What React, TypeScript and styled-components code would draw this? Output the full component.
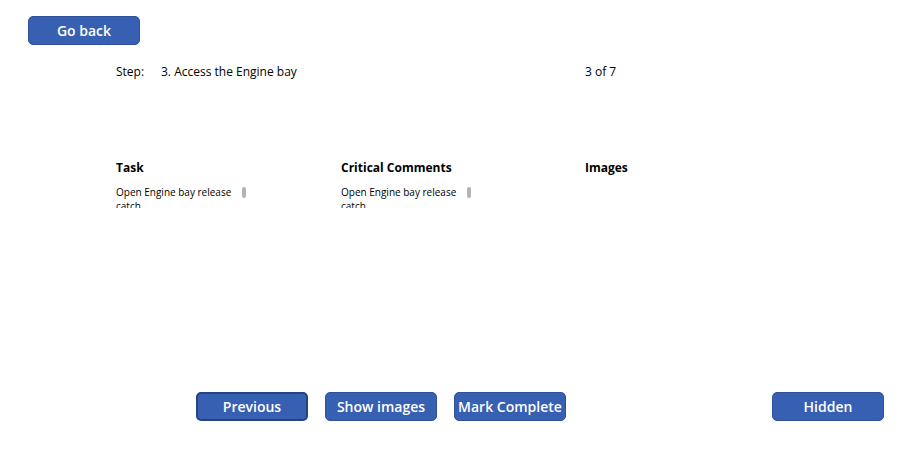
import React from "react";
import styled, { createGlobalStyle } from "styled-components";

const Global = createGlobalStyle`
  html, body { margin: 0; padding: 0; background: #ffffff; }
  body { font-family: "Open Sans", "Noto Sans", sans-serif; color: #000; }
`;

const Page = styled.div`
  width: 904px;
  height: 466px;
  display: flex;
  flex-direction: column;
  box-sizing: border-box;
  overflow: hidden;
`;

const TopBar = styled.div`
  padding: 16px 0 0 28px;
  display: flex;
`;

const Button = styled.button<{ $focused?: boolean }>`
  width: 112px;
  height: 29px;
  box-sizing: border-box;
  border-radius: 5px;
  background: #3860b2;
  border: ${(p) => (p.$focused ? "2px solid #24437f" : "1px solid #2f519a")};
  color: #ffffff;
  font-family: "Open Sans", sans-serif;
  font-weight: 600;
  font-size: 14px;
  padding: 0;
  display: flex;
  align-items: center;
  justify-content: center;
  cursor: pointer;
`;

const StepRow = styled.div`
  margin-top: 19px;
  padding-left: 116px;
  display: grid;
  grid-template-columns: 45px 424px auto;
  font-size: 12px;
  line-height: 16px;
`;

const Columns = styled.div`
  margin-top: 80px;
  padding-left: 116px;
  display: grid;
  grid-template-columns: 225px 244px auto;
`;

const Column = styled.div`
  display: flex;
  flex-direction: column;
`;

const Heading = styled.div`
  font-weight: 700;
  font-size: 12px;
  line-height: 16px;
`;

const TextBox = styled.div`
  position: relative;
  margin-top: 9px;
  width: 131px;
  height: 23px;
  overflow: hidden;
  box-sizing: border-box;
  padding-right: 12px;
  font-size: 10px;
  line-height: 14px;
`;

const Thumb = styled.div`
  position: absolute;
  top: 2px;
  right: 1px;
  width: 4px;
  height: 11px;
  border-radius: 2px;
  background: #b3b3b3;
`;

const Footer = styled.div`
  margin-top: auto;
  padding: 0 0 45px 196px;
  display: flex;
  align-items: flex-end;
`;

const Group = styled.div`
  display: flex;
  gap: 17px;
`;

const Spacer = styled.div`
  flex: 1;
`;

const Right = styled.div`
  padding-right: 20px;
`;

export default function App() {
  return (
    <Page>
      <Global />
      <TopBar>
        <Button>Go back</Button>
      </TopBar>
      <StepRow>
        <span>Step:</span>
        <span>3. Access the Engine bay</span>
        <span>3 of 7</span>
      </StepRow>
      <Columns>
        <Column>
          <Heading>Task</Heading>
          <TextBox>
            Open Engine bay release catch
            <Thumb />
          </TextBox>
        </Column>
        <Column>
          <Heading>Critical Comments</Heading>
          <TextBox>
            Open Engine bay release catch
            <Thumb />
          </TextBox>
        </Column>
        <Column>
          <Heading>Images</Heading>
        </Column>
      </Columns>
      <Footer>
        <Group>
          <Button $focused>Previous</Button>
          <Button>Show images</Button>
          <Button>Mark Complete</Button>
        </Group>
        <Spacer />
        <Right>
          <Button>Hidden</Button>
        </Right>
      </Footer>
    </Page>
  );
}
